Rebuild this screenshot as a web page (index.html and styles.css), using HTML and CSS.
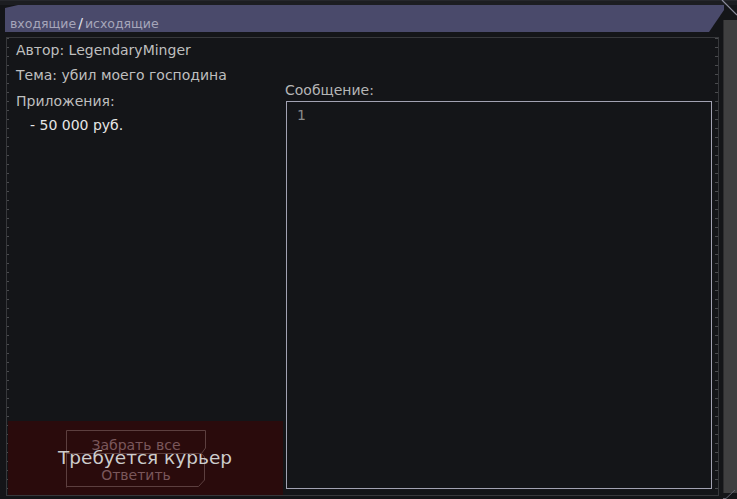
FILE: index.html
```html
<!DOCTYPE html>
<html lang="ru">
<head>
<meta charset="utf-8">
<title>Почта</title>
<link rel="stylesheet" href="styles.css">
</head>
<body>
<div class="window">
  <svg class="corner-tr" width="16" height="16" viewBox="0 0 16 16"><path d="M1 0 L16 15" stroke="#8c8c9c" stroke-width="1.2" fill="none"/></svg>
  <div class="header">
    <span class="tab">входящие</span><span class="slash">/</span><span class="tab">исходящие</span>
  </div>
  <div class="scroll"></div>
  <div class="panel">
    <div class="box">
      <div class="left">
        <div class="info">
          <div class="row">Автор: LegendaryMinger</div>
          <div class="row">Тема: убил моего господина</div>
          <div class="row row-gap">Приложения:</div>
          <div class="row attach">- 50 000 руб.</div>
        </div>
        <div class="courier">
          <div class="buttons">
            <svg class="outline" width="140" height="58" viewBox="0 0 140 58"><path d="M0.5 57.5 V0.5 H139.5 V18 L135.5 23.5 H0.5 M135.5 23.5 L138.5 27 V50 L132.5 56.5 H0.5" stroke="#5c3f3f" fill="none"/></svg>
            <div class="btn btn-top"><span>Забрать все</span></div>
            <div class="btn btn-bottom"><span>Ответить</span></div>
          </div>
          <div class="notice">Требуется курьер</div>
        </div>
      </div>
      <div class="right">
        <div class="label">Сообщение:</div>
        <div class="message"><span class="ln">1</span></div>
      </div>
    </div>
  </div>
  <svg class="corner-br" width="14" height="10" viewBox="0 0 14 10"><path d="M0 9.5 H3 L12 1" stroke="#6a6a76" stroke-width="1" fill="none"/></svg>
</div>
</body>
</html>
```

FILE: styles.css
```css
* { box-sizing: border-box; }
html, body { margin: 0; padding: 0; background: #141518; }
body { width: 737px; height: 499px; overflow: hidden; }

.window {
  position: relative;
  width: 737px;
  height: 499px;
  display: grid;
  grid-template-columns: 5px 718px 14px;
  grid-template-rows: 5px 15px 12px 1fr;
  background: linear-gradient(#26272c 0 1px, #1c1d21 1px 5px, #141518 5px);
  font-family: "DejaVu Sans", sans-serif;
}

.corner-tr { position: absolute; top: 0; right: 0; }
.corner-br { position: absolute; bottom: 0; right: 0; }

.header {
  grid-column: 2 / 4;
  grid-row: 2 / 4;
  margin-right: 13px;
  background: #4a4a6b;
  clip-path: polygon(0 3px, 13px 0, 100% 0, 100% 5px, calc(100% - 15px) 100%, 0 100%);
  padding: 10px 0 0 5px;
  font-size: 12.5px;
  line-height: 16px;
  color: #a6a6ba;
}
.slash { color: #e6e6ee; padding: 0 2px; font-size: 14px; }

.scroll {
  grid-column: 3;
  grid-row: 3 / 5;
  margin: 0 0 6px 0;
  background: #3f3f40;
  border-left: 1px solid #2c2c2e;
}

.panel {
  grid-column: 2;
  grid-row: 4;
  padding: 5px 4px 3px 1px;
}

.box {
  height: 100%;
  border: 1px solid #37383b;
  display: grid;
  grid-template-columns: 276px 1fr;
  background:
    repeating-linear-gradient(#4a4b4e 0 1px, transparent 1px 9px) left top / 2px 100% no-repeat,
    repeating-linear-gradient(#4a4b4e 0 1px, transparent 1px 9px) right top / 3px 100% no-repeat;
}

.left { display: flex; flex-direction: column; }
.info {
  flex: 1;
  padding: 0 0 0 9px;
  font-size: 14px;
  color: #bfbfbf;
}
.row { line-height: 25px; height: 25px; }
.row-gap { margin-top: 1px; }
.attach { padding-left: 14px; margin-top: -1px; color: #e6e6e6; }

.courier {
  position: relative;
  height: 74px;
  margin-left: 1px;
  background: #2a0b0c;
  padding: 9px 0 0 58px;
}
.buttons {
  position: relative;
  width: 140px;
  display: flex;
  flex-direction: column;
}
.outline { position: absolute; left: 0; top: 0; }
.btn {
  position: relative;
  display: flex;
  align-items: center;
  justify-content: center;
  font-size: 14px;
  color: #7a575b;
}
.btn-top { height: 29px; }
.btn-bottom { height: 28px; padding-top: 3px; }

.notice {
  position: absolute;
  left: 41px;
  top: 24px;
  width: 192px;
  text-align: center;
  font-size: 18.5px;
  line-height: 26px;
  color: #cdcdcd;
  white-space: nowrap;
}

.right {
  display: flex;
  flex-direction: column;
  padding: 43px 6px 6px 2px;
}
.label {
  font-size: 14px;
  line-height: 18px;
  margin-bottom: 2px;
  color: #b6b6b6;
}
.message {
  flex: 1;
  margin-left: 1px;
  border: 1px solid #a2a2b2;
  padding: 4px 0 0 10px;
  font-size: 14px;
  line-height: 18px;
  color: #8a8a8a;
}
```
